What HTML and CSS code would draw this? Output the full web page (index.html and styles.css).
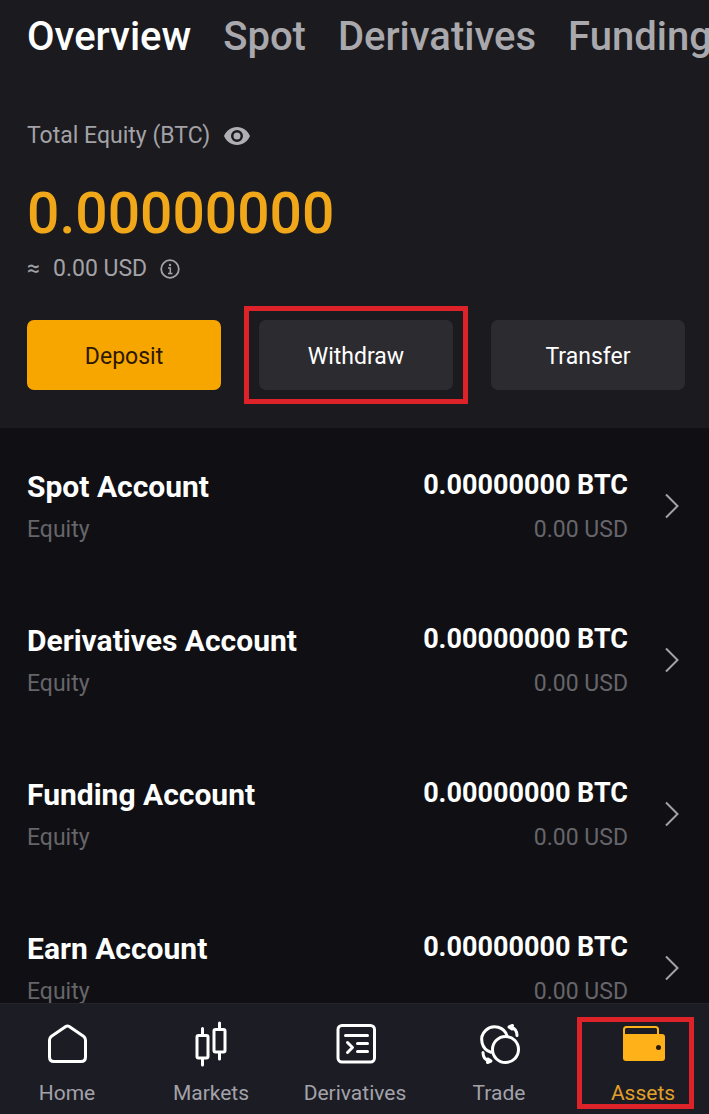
FILE: index.html
```
<!DOCTYPE html>
<html lang="en">

<head>
    <meta charset="UTF-8">
    <meta name="viewport" content="width=device-width, initial-scale=1.0">
    <title>Assets</title>
    <link rel="stylesheet" href="styles.css">
</head>

<body>
    <div class="app">
        <header class="summary">
            <nav class="tabs">
                <a class="tab active" href="#">Overview</a>
                <a class="tab" href="#">Spot</a>
                <a class="tab" href="#">Derivatives</a>
                <a class="tab" href="#">Funding</a>
            </nav>

            <div class="equity_label">
                <span>Total Equity (BTC)</span>
                <button class="icon_btn" type="button" aria-label="Hide balance">
                    <svg width="26" height="20" viewBox="0 0 26 20">
                        <path fill="#b0afb3" fill-rule="evenodd" d="M13 1C7 1 2.500 4.500 0 10C2.500 15.500 7 19 13 19S23.500 15.500 26 10C23.500 4.500 19 1 13 1ZM13 16A6 6 0 1 1 13 4A6 6 0 0 1 13 16Z" />
                        <circle cx="13" cy="10" r="3.500" fill="#b0afb3" />
                    </svg>
                </button>
            </div>

            <p class="equity_total">0.00000000</p>

            <div class="equity_usd">
                <span class="approx">≈</span>
                <span>0.00 USD</span>
                <button class="icon_btn" type="button" aria-label="Equity info">
                    <svg width="20" height="20" viewBox="0 0 20 20" fill="none" stroke="#a3a2a7" stroke-width="1.800">
                        <circle cx="10" cy="10" r="8.800" />
                        <path d="M8 9H10.300V14.500M8 14.500H12.500" stroke-width="1.500" />
                        <circle cx="10" cy="6" r="1.200" fill="#a3a2a7" stroke="none" />
                    </svg>
                </button>
            </div>

            <div class="actions">
                <button class="action primary" type="button">Deposit</button>
                <button class="action marked" type="button">Withdraw</button>
                <button class="action" type="button">Transfer</button>
            </div>
        </header>

        <main class="accounts">
            <a class="account" href="#">
                <div class="account_name">
                    <h2>Spot Account</h2>
                    <small>Equity</small>
                </div>
                <div class="account_value">
                    <strong>0.00000000 BTC</strong>
                    <small>0.00 USD</small>
                </div>
                <svg class="chevron" width="14" height="26" viewBox="0 0 14 26">
                    <path d="M1 1.500L12.500 13L1 24.500" />
                </svg>
            </a>

            <a class="account" href="#">
                <div class="account_name">
                    <h2>Derivatives Account</h2>
                    <small>Equity</small>
                </div>
                <div class="account_value">
                    <strong>0.00000000 BTC</strong>
                    <small>0.00 USD</small>
                </div>
                <svg class="chevron" width="14" height="26" viewBox="0 0 14 26">
                    <path d="M1 1.500L12.500 13L1 24.500" />
                </svg>
            </a>

            <a class="account" href="#">
                <div class="account_name">
                    <h2>Funding Account</h2>
                    <small>Equity</small>
                </div>
                <div class="account_value">
                    <strong>0.00000000 BTC</strong>
                    <small>0.00 USD</small>
                </div>
                <svg class="chevron" width="14" height="26" viewBox="0 0 14 26">
                    <path d="M1 1.500L12.500 13L1 24.500" />
                </svg>
            </a>

            <a class="account" href="#">
                <div class="account_name">
                    <h2>Earn Account</h2>
                    <small>Equity</small>
                </div>
                <div class="account_value">
                    <strong>0.00000000 BTC</strong>
                    <small>0.00 USD</small>
                </div>
                <svg class="chevron" width="14" height="26" viewBox="0 0 14 26">
                    <path d="M1 1.500L12.500 13L1 24.500" />
                </svg>
            </a>
        </main>

        <nav class="bottom_bar">
            <a class="bar_item" href="#">
                <svg width="48" height="48" viewBox="0 0 48 48">
                    <path d="M22.800 5.600Q24.500 4.400 26.200 5.600L40.500 15.300Q42.500 16.800 42.500 19V36Q42.500 40.500 38 40.500H11Q6.500 40.500 6.500 36V19Q6.500 16.800 8.500 15.300Z" />
                </svg>
                <span>Home</span>
            </a>
            <a class="bar_item" href="#">
                <svg width="48" height="48" viewBox="0 0 48 48">
                    <rect x="10" y="14.500" width="11" height="22.500" rx="1.500" />
                    <rect x="27" y="8.500" width="11" height="22.500" rx="1.500" />
                    <path d="M15.500 7.500V14M15.500 37.500V44M32.500 2V8M32.500 31.500V38" />
                </svg>
                <span>Markets</span>
            </a>
            <a class="bar_item" href="#">
                <svg width="48" height="48" viewBox="0 0 48 48">
                    <rect x="7" y="4.500" width="36.500" height="36.500" rx="4" />
                    <path d="M14.500 14.500H36.500M26.500 22.500H36.500M26.500 30.500H36.500" stroke-width="3" />
                    <path d="M16.500 21.500L21.500 26.500L16.500 31.500" stroke-width="3" />
                </svg>
                <span>Derivatives</span>
            </a>
            <a class="bar_item" href="#">
                <svg width="48" height="48" viewBox="0 0 48 48">
                    <circle cx="30.500" cy="28.500" r="13" />
                    <path d="M16 31.200A13 13 0 1 1 32.300 15.500" />
                    <path d="M34 6L37.500 4.500L37 8ZM36.500 6.500C40 7.500 42 10.500 42 14.500" />
                    <path d="M16 40L12.500 41.500L13 38ZM13.500 39.500C10 38.500 8 35.500 8 31.500" />
                </svg>
                <span>Trade</span>
            </a>
            <a class="bar_item current" href="#">
                <svg width="48" height="48" viewBox="0 0 48 48">
                    <path class="wallet_flap" d="M5 15V8.500Q5 6 7.500 6H36.500Q39 6 39 8.500V15" />
                    <path class="wallet_body" d="M4 13H43Q46 13 46 16V37Q46 40 43 40H7Q4 40 4 37Z" />
                    <circle class="wallet_clasp" cx="39.500" cy="26.500" r="2.500" />
                </svg>
                <span>Assets</span>
            </a>
        </nav>
    </div>
</body>

</html>
```
FILE: styles.css
```
* {
    margin: 0;
    padding: 0;
    box-sizing: border-box;
}

body {
    background: #101014;
    color: white;
    font-family: Roboto, "Noto Sans", sans-serif;
    font-size: 23px;
    line-height: 32px;
}

a {
    color: inherit;
    text-decoration: none;
}

button {
    border: none;
    background: none;
    color: inherit;
    font: inherit;
    cursor: pointer;
}

svg {
    display: block;
}

.app {
    height: 100vh;
    display: flex;
    flex-direction: column;
    overflow: hidden;
}

/* top part */
.summary {
    flex: none;
    padding: 12px 24px 38px 27px;
    background: #1b1a1f;
}

.tabs {
    display: flex;
    gap: 32px;
    margin-right: -24px;
    overflow: hidden;
    font-size: 40px;
    font-weight: 500;
    line-height: 50px;
    white-space: nowrap;
}

.tab {
    color: #a9a8ac;
}

.tab.active {
    color: white;
}

.equity_label {
    display: flex;
    align-items: center;
    gap: 14px;
    margin-top: 58px;
    color: #a3a2a7;
}

.equity_total {
    margin-top: 30px;
    color: #f0a71a;
    font-size: 57px;
    font-weight: 500;
    line-height: 64px;
}

.equity_usd {
    display: flex;
    align-items: center;
    gap: 13px;
    margin-top: 7px;
    color: #a3a2a7;
}

.actions {
    display: grid;
    grid-template-columns: repeat(3, 1fr);
    gap: 38px;
    margin-top: 35px;
}

.action {
    position: relative;
    height: 70px;
    padding-top: 3px;
    border-radius: 7px;
    background: #2c2b30;
}

.action.primary {
    background: #f7a600;
    color: #2b1800;
}

/* red frame round a control */
.marked::after,
.current::after {
    content: "";
    position: absolute;
    border: 5px solid #dd2229;
}

.marked::after {
    inset: -14px -15px;
}

/* account list */
.accounts {
    flex: 1;
    min-height: 0;
    overflow: hidden;
}

.account {
    height: 154px;
    padding: 38px 30px 0 27px;
    display: flex;
}

.account_name,
.account_value {
    display: flex;
    flex-direction: column;
}

.account_name {
    gap: 6px;
}

.account_value {
    gap: 10px;
    margin-left: auto;
    text-align: right;
}

.account h2 {
    font-size: 30px;
    font-weight: 700;
    line-height: 42px;
}

.account strong {
    font-size: 27px;
    font-weight: 700;
    line-height: 38px;
}

.account small {
    color: #66656a;
    font-size: 23px;
}

.chevron {
    margin: 27px 0 0 37px;
    fill: none;
    stroke: #a3a2a7;
    stroke-width: 2;
}

/* bottom bar */
.bottom_bar {
    flex: none;
    display: grid;
    grid-template-columns: repeat(5, 1fr);
    margin: 0 -6px 0 -5px;
    padding: 17px 0 5px;
    border-top: 1px solid #24232a;
    background: #1c1c24;
    color: #a3a2a9;
    font-size: 21px;
}

.bar_item {
    position: relative;
    display: flex;
    flex-direction: column;
    align-items: center;
    gap: 8px;
}

.bar_item svg {
    fill: none;
    stroke: white;
    stroke-width: 3;
    stroke-linecap: round;
    stroke-linejoin: round;
}

.bar_item.current {
    color: #e0a02a;
}

.current::after {
    inset: -4px 21px 0 6px;
}

.bar_item .wallet_flap {
    stroke: #ffb11a;
    stroke-width: 2;
}

.wallet_body {
    fill: #ffb11a;
    stroke: none;
}

.wallet_clasp {
    fill: #2b1800;
    stroke: none;
}
```
